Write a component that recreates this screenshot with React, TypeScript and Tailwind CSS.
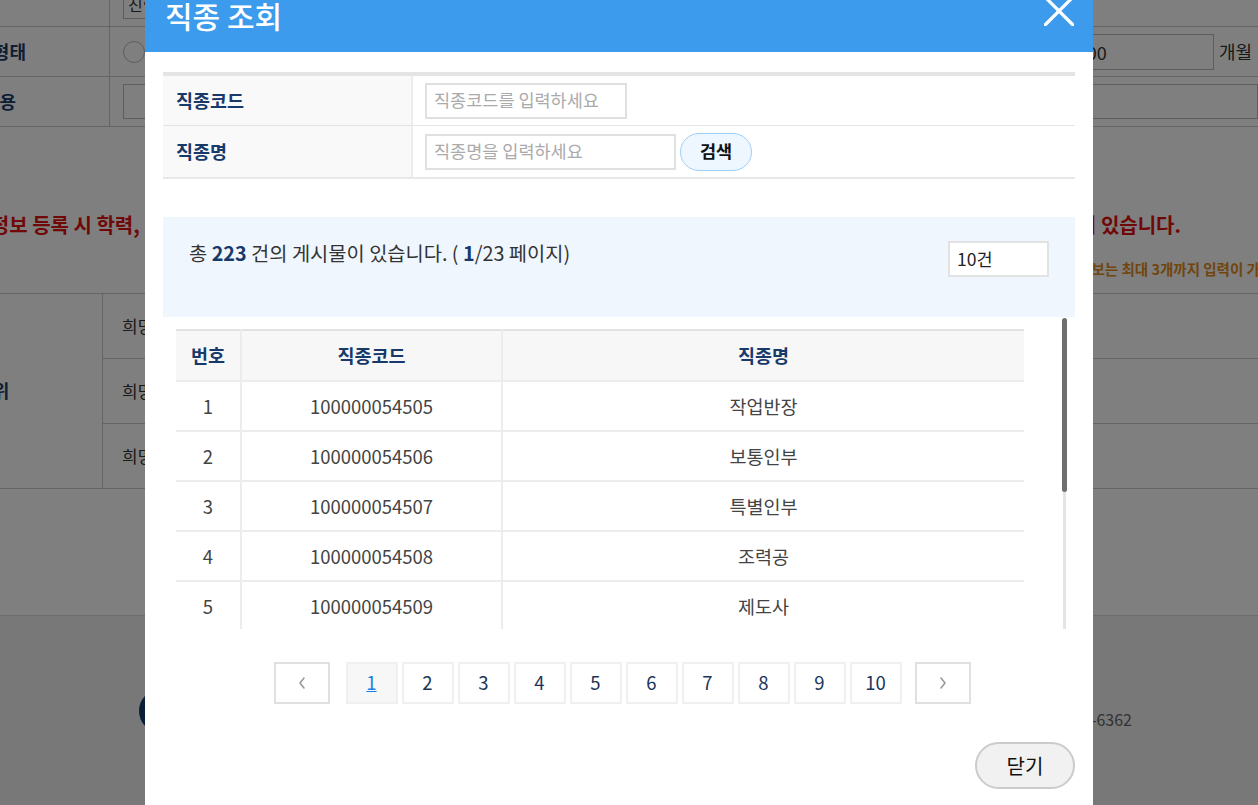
import React from 'react'

const rows = [
  { no: 1, code: '100000054505', name: '작업반장' },
  { no: 2, code: '100000054506', name: '보통인부' },
  { no: 3, code: '100000054507', name: '특별인부' },
  { no: 4, code: '100000054508', name: '조력공' },
  { no: 5, code: '100000054509', name: '제도사' },
  { no: 6, code: '100000054510', name: '비계공' },
]

const pages = [1, 2, 3, 4, 5, 6, 7, 8, 9, 10]

function BackgroundPage() {
  return (
    <div className="w-[1258px]">
      {/* form table */}
      <div className="flex h-[27px] border-b border-[#c8c8c8]">
        <div className="w-[110px] border-r border-[#c8c8c8]" />
        <div className="ml-[13px] -mt-[12px] h-[31px] w-[170px] border border-[#bbb] px-1 text-[16px] leading-[30px] text-[#333]">진행상태</div>
      </div>
      <div className="flex h-[50px] items-center border-b border-[#c8c8c8]">
        <div className="flex h-full w-[110px] items-center justify-end border-r border-[#c8c8c8] pr-[83px] text-[18px] font-bold text-[#1d3d6b]">
          <span className="whitespace-nowrap">고용형태</span>
        </div>
        <div className="ml-[13px] h-[22px] w-[22px] rounded-full border border-[#bbb] bg-white" />
        <div className="ml-auto flex items-center">
          <div className="h-[36px] w-[170px] border border-[#bbb] pl-[22px] text-[18px] leading-[34px] text-[#333]">1200</div>
          <span className="ml-[5px] mr-[6px] text-[18px] text-[#333]">개월</span>
        </div>
      </div>
      <div className="flex h-[50px] items-center border-b border-[#c8c8c8]">
        <div className="flex h-full w-[110px] items-center justify-end border-r border-[#c8c8c8] pr-[93px] text-[18px] font-bold text-[#1d3d6b]">
          <span className="whitespace-nowrap">직무내용</span>
        </div>
        <div className="ml-[13px] h-[35px] flex-1 border border-[#bbb] bg-white" />
      </div>

      {/* notices */}
      <div className="mt-[83px] flex justify-between whitespace-nowrap text-[20px] font-bold text-[#e01010]">
        <span className="-ml-[46px]">구직정보 등록 시 학력, 경력, 자격증 등</span>
        <span className="mr-[77px]">이 있습니다.</span>
      </div>
      <div className="mt-[18px] flex justify-end whitespace-nowrap text-[14.5px] font-bold text-[#e08a1c]">
        <span className="-mr-[60px]">※ 희망직종 정보는 최대 3개까지 입력이 가능합니다.</span>
      </div>

      {/* wish table */}
      <div className="mt-[13px] flex h-[196px] border-y border-[#c8c8c8]">
        <div className="flex w-[103px] items-center border-r border-[#c8c8c8] text-[18px] font-bold text-[#1d3d6b]">
          <span className="-ml-[57px] whitespace-nowrap">희망순위</span>
        </div>
        <div className="flex flex-1 flex-col">
          {['희망1순위', '희망2순위', '희망3순위'].map((t, i) => (
            <div key={t} className={`flex flex-1 items-center pl-[19px] text-[17px] text-[#333] ${i < 2 ? 'border-b border-[#c8c8c8]' : ''}`}>
              {t}
            </div>
          ))}
        </div>
      </div>

      {/* footer */}
      <div className="mt-[126px] h-[200px] border-t border-[#d8d8d8] bg-[#f0f0f0]">
        <div className="flex items-start">
          <div className="ml-[139px] mt-[73px] h-[44px] w-[44px] rounded-full bg-[#143c6c]" />
          <span className="ml-auto mr-[126px] mt-[91px] text-[16px] text-[#666]">Tel. 1577-6362</span>
        </div>
      </div>
    </div>
  )
}

function Chevron({ dir }: { dir: 'left' | 'right' }) {
  return (
    <svg width="10" height="16" viewBox="0 0 10 16" fill="none">
      <polyline
        points={dir === 'left' ? '7,3 3,8 7,13' : '3,3 7,8 3,13'}
        stroke="#9a9a9a"
        strokeWidth="1.6"
        strokeLinecap="round"
        strokeLinejoin="round"
      />
    </svg>
  )
}

function Modal() {
  return (
    <div className="absolute left-[145px] top-0 w-[948px] bg-white pb-[40px]">
      {/* header */}
      <div className="relative h-[52px] bg-[#3c9bec] pl-[20px]">
        <h1 className="text-[30px] leading-[30px] font-medium text-white">직종 조회</h1>
        <svg className="absolute left-[899px] top-[-4px]" width="30" height="30" viewBox="0 0 30 30">
          <line x1="1.5" y1="1.5" x2="28.5" y2="28.5" stroke="white" strokeWidth="3.2" strokeLinecap="round" />
          <line x1="28.5" y1="1.5" x2="1.5" y2="28.5" stroke="white" strokeWidth="3.2" strokeLinecap="round" />
        </svg>
      </div>

      <div className="px-[18px] pt-[20px]">
        {/* search */}
        <div className="border-t-[4px] border-[#e4e4e4]">
          <div className="flex h-[50px] border-b border-[#e4e4e4]">
            <div className="flex w-[250px] items-center border-r-2 border-[#ececec] bg-[#f9f9f9] pl-[13px] text-[18.5px] font-bold text-[#183a6a]">
              직종코드
            </div>
            <div className="flex items-center pl-[12px]">
              <div className="flex h-[36px] w-[202px] items-center border-2 border-[#e0e0e0] px-[7px] text-[17.5px] text-[#aaa]">
                직종코드를 입력하세요
              </div>
            </div>
          </div>
          <div className="flex h-[53px] border-b-2 border-[#e8e8e8]">
            <div className="flex w-[250px] items-center border-r-2 border-[#ececec] bg-[#f9f9f9] pl-[13px] text-[18.5px] font-bold text-[#183a6a]">
              직종명
            </div>
            <div className="flex items-center pl-[12px]">
              <div className="flex h-[36px] w-[251px] items-center border-2 border-[#e0e0e0] px-[7px] text-[17.5px] text-[#aaa]">
                직종명을 입력하세요
              </div>
              <button className="ml-[4px] h-[38px] w-[72px] rounded-full border border-[#9fd0f6] bg-[#eef7ff] text-[17.5px] font-bold text-[#111]">
                검색
              </button>
            </div>
          </div>
        </div>

        {/* info */}
        <div className="mt-[38px] flex h-[100px] items-start justify-between bg-[#eff6fd] px-[26px] pt-[23px]">
          <p className="text-[19.8px] leading-[26px] text-[#333]">
            총 <b className="text-[#183a6a]">223</b> 건의 게시물이 있습니다. ( <b className="text-[#183a6a]">1</b>/23 페이지)
          </p>
          <div className="mt-[1px] flex h-[36px] w-[101px] items-center border-2 border-[#e2e2e2] bg-white pl-[7px] text-[17.5px] text-[#222]">
            10건
          </div>
        </div>

        {/* list */}
        <div className="flex h-[312px]">
          <div className="h-full overflow-hidden pl-[13px] pt-[12px]">
            <table className="w-[848px] table-fixed border-collapse border-t-2 border-[#e2e2e2] text-[18.5px]">
              <colgroup>
                <col className="w-[65px]" />
                <col className="w-[261px]" />
                <col className="w-[522px]" />
              </colgroup>
              <thead>
                <tr className="h-[51px] bg-[#f7f7f7] font-bold text-[#183a6a]">
                  <th className="border-r-2 border-b-2 border-[#ececec]">번호</th>
                  <th className="border-r-2 border-b-2 border-[#ececec]">직종코드</th>
                  <th className="border-b-2 border-[#ececec]">직종명</th>
                </tr>
              </thead>
              <tbody className="text-[#444]">
                {rows.map((r) => (
                  <tr key={r.no} className="h-[50px]">
                    <td className="border-r-2 border-b-2 border-[#ececec] pt-[1px] text-center">{r.no}</td>
                    <td className="border-r-2 border-b-2 border-[#ececec] pt-[1px] text-center">{r.code}</td>
                    <td className="border-b-2 border-[#ececec] pt-[1px] text-center">{r.name}</td>
                  </tr>
                ))}
              </tbody>
            </table>
          </div>
          <div className="ml-[38px] flex w-[5px] flex-col items-center pt-[1px]">
            <div className="h-[174px] w-[5px] rounded-full bg-[#6e6e6e]" />
            <div className="w-[3px] flex-1 bg-[#e4e4e4]" />
          </div>
        </div>

        {/* pagination */}
        <div className="mt-[33px] flex items-center justify-center pl-[6px]">
          <button className="flex h-[42px] w-[56px] items-center justify-center border-2 border-[#e0e0e0] bg-white">
            <Chevron dir="left" />
          </button>
          <div className="ml-[16px] flex gap-[4px]">
            {pages.map((p) => (
              <button
                key={p}
                className={`h-[42px] w-[52px] border-2 border-[#f0f0f0] text-[18.5px] ${
                  p === 1 ? 'bg-[#f7f7f7] text-[#1a7fe0] underline' : 'bg-white text-[#1b3558]'
                }`}
              >
                {p}
              </button>
            ))}
          </div>
          <button className="ml-[13px] flex h-[42px] w-[56px] items-center justify-center border-2 border-[#e0e0e0] bg-white">
            <Chevron dir="right" />
          </button>
        </div>

        {/* close */}
        <div className="mt-[38px] flex justify-end">
          <button className="h-[47px] w-[100px] rounded-full border-2 border-[#cbcbcb] bg-[#f1f1f1] text-[20px] text-[#111]">
            닫기
          </button>
        </div>
      </div>
    </div>
  )
}

export default function App() {
  return (
    <div className="relative h-[805px] w-[1258px] overflow-hidden bg-white font-['Noto_Sans_CJK_KR','Noto_Sans',sans-serif]">
      <BackgroundPage />
      <div className="absolute inset-0 bg-black/50" />
      <Modal />
    </div>
  )
}
